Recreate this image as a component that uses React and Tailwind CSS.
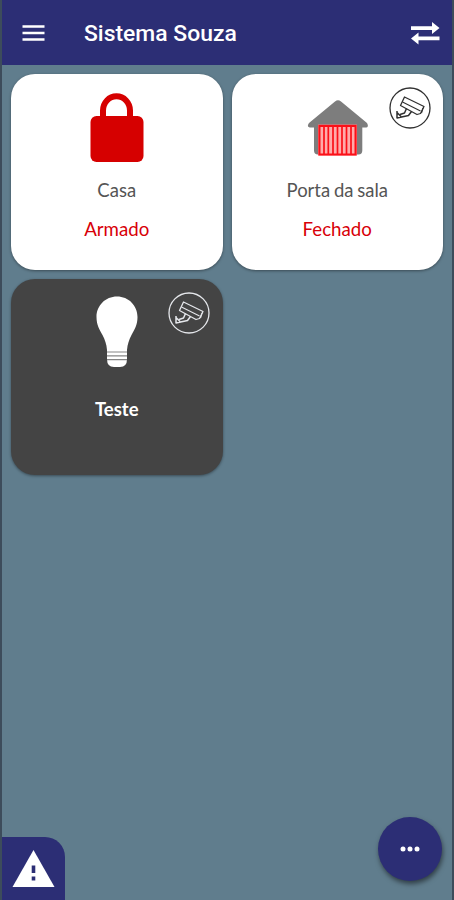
const LockIcon = () => (
  <svg width="54" height="70" viewBox="0 0 54 70" className="mt-[19px]">
    <path d="M13 26V17.5a13.5 14.2 0 0 1 27 0V26" fill="none" stroke="#d60000" strokeWidth="6" />
    <rect x="0.5" y="23" width="53" height="46" rx="6" fill="#d60000" />
  </svg>
)

const GarageIcon = () => (
  <svg width="62" height="58" viewBox="0 0 62 58" className="ml-px mt-[25px]">
    <path
      d="M28 2.500Q31 0 34 2.500L60 24Q62.500 28.500 58 28.500H55.300V51.500Q55.300 55.500 51.500 55.500H11Q7 55.500 7 51.500V28.500H4Q-1 28.500 2 24Z"
      fill="#7d7d7d"
    />
    <rect x="11" y="25.500" width="39" height="31" fill="#ff7076" />
    <rect x="12.500" y="27" width="36" height="28.500" fill="#ffaaaa" stroke="#fb1018" strokeWidth="2" />
    <path d="M17 28V55M21.300 28V55M26 28V55M30.500 28V55M35 28V55M39.500 28V55M44 28V55" stroke="#fb1018" strokeWidth="1.700" />
  </svg>
)

const BulbIcon = () => (
  <svg width="42" height="72" viewBox="0 0 42 72" className="mt-[17px]">
    <path
      d="M21 0.500C9.500 0.500 0.500 9.500 0.500 21C0.500 29 3.500 33.500 6.500 39C9 44 10.500 48 11 54V63Q11 71 18 71H24Q31 71 31 63V54C31.500 48 33 44 35.500 39C38.500 33.500 41.500 29 41.500 21C41.500 9.500 32.500 0.500 21 0.500Z"
      fill="#fff"
    />
    <path d="M11 56H31M11 59.800H31M11 63.600H31" stroke="#858585" strokeWidth="1.200" />
  </svg>
)

const CameraBadge = ({ className }) => (
  <svg width="42" height="42" viewBox="0 0 42 42" fill="none" stroke="currentColor" strokeLinejoin="round" className={`absolute ${className}`}>
    <circle cx="21" cy="21" r="20" strokeWidth="1.300" />
    <path d="M15.500 10 35 19.500 31.500 26.500 28 27.500 11.500 18.500Z" strokeWidth="1.300" />
    <path d="M13.500 15 31.500 24M32.500 26 34 21" strokeWidth="1.100" />
    <path d="M17.500 21.500 15.500 26 11 27.500M8 24V31.500M8 31 19.500 28.500 22.500 24.500M8 25.500 12 29.500" strokeWidth="1.500" />
  </svg>
)

const devices = [
  { name: "Casa", status: "Armado", icon: LockIcon },
  { name: "Porta da sala", status: "Fechado", icon: GarageIcon, camera: "top-[13px] right-[12px] text-[#303030]" },
  { name: "Teste", icon: BulbIcon, dark: true, camera: "top-[13px] right-[13px] text-gray-200" },
]

const DeviceCard = ({ device }) => {
  const Icon = device.icon
  return (
    <div
      className={`relative h-[196px] rounded-[24px] shadow-[0_1px_3px_rgba(0,0,0,0.4)] flex flex-col items-center ${
        device.dark ? "bg-[#444444] text-white" : "bg-white text-[#555555]"
      }`}
    >
      <div className="h-[102px]">
        <Icon />
      </div>
      {device.camera && <CameraBadge className={device.camera} />}
      <p className={`text-[18.500px] leading-[28px] [word-spacing:-1px] ${device.dark ? "mt-[14px] font-bold" : ""}`}>
        {device.name}
      </p>
      {device.status && <p className="mt-[11px] text-[18.700px] leading-[28px] text-[#d80008]">{device.status}</p>}
    </div>
  )
}

const App = () => {
  return (
    <div className="h-[900px] w-[454px] flex flex-col overflow-hidden border-x-2 border-[#3d4c5b] bg-[#607d8d] font-['Lato',sans-serif]">
      <header className="h-[65px] shrink-0 flex items-center bg-[#2c2e75] pl-[20px] pr-[12px] text-white">
        <svg width="23" height="18" viewBox="0 0 23 18">
          <path d="M0.500 2.500H22.500M0.500 9H22.500M0.500 15.500H22.500" stroke="currentColor" strokeWidth="2.300" />
        </svg>
        <h1 className="ml-[39px] flex-1 pt-[3px] text-[22.900px] font-medium font-['Roboto',sans-serif]">Sistema Souza</h1>
        <svg width="30" height="24" viewBox="0 0 30 24" fill="currentColor">
          <path d="M1 5.300H22V1L29.500 7 22 13V9H1Z" />
          <path d="M29.500 15.500H8.500V11.500L1 17.500 8.500 23.500V19.200H29.500Z" />
        </svg>
      </header>

      <main className="grid flex-1 grid-cols-2 content-start gap-[9px] px-[9px] pt-[9px]">
        {devices.map((device) => (
          <DeviceCard key={device.name} device={device} />
        ))}
      </main>

      <footer className="flex shrink-0 items-end justify-between">
        <button className="flex h-[63px] w-[63px] justify-center rounded-tr-[20px] bg-[#2c2e75]" aria-label="Alertas">
          <svg width="44" height="40" viewBox="0 0 44 40" className="mt-[12px]">
            <path d="M21.500 1 42.500 38H0.500Z" fill="#fff" />
            <path d="M19.700 16.500H23.300V24H19.700ZM19.700 27.500H23.300V31.500H19.700Z" fill="#2c2e75" />
          </svg>
        </button>
        <button
          className="mr-[10px] mb-[19px] flex size-[64px] items-center justify-center rounded-full bg-[#2c2e75] shadow-[1px_3px_5px_rgba(0,0,0,0.5)]"
          aria-label="Mais"
        >
          <svg width="20" height="6" viewBox="0 0 20 6" fill="#fff">
            <circle cx="3" cy="3" r="2.500" />
            <circle cx="10" cy="3" r="2.500" />
            <circle cx="17" cy="3" r="2.500" />
          </svg>
        </button>
      </footer>
    </div>
  )
}

export default App
